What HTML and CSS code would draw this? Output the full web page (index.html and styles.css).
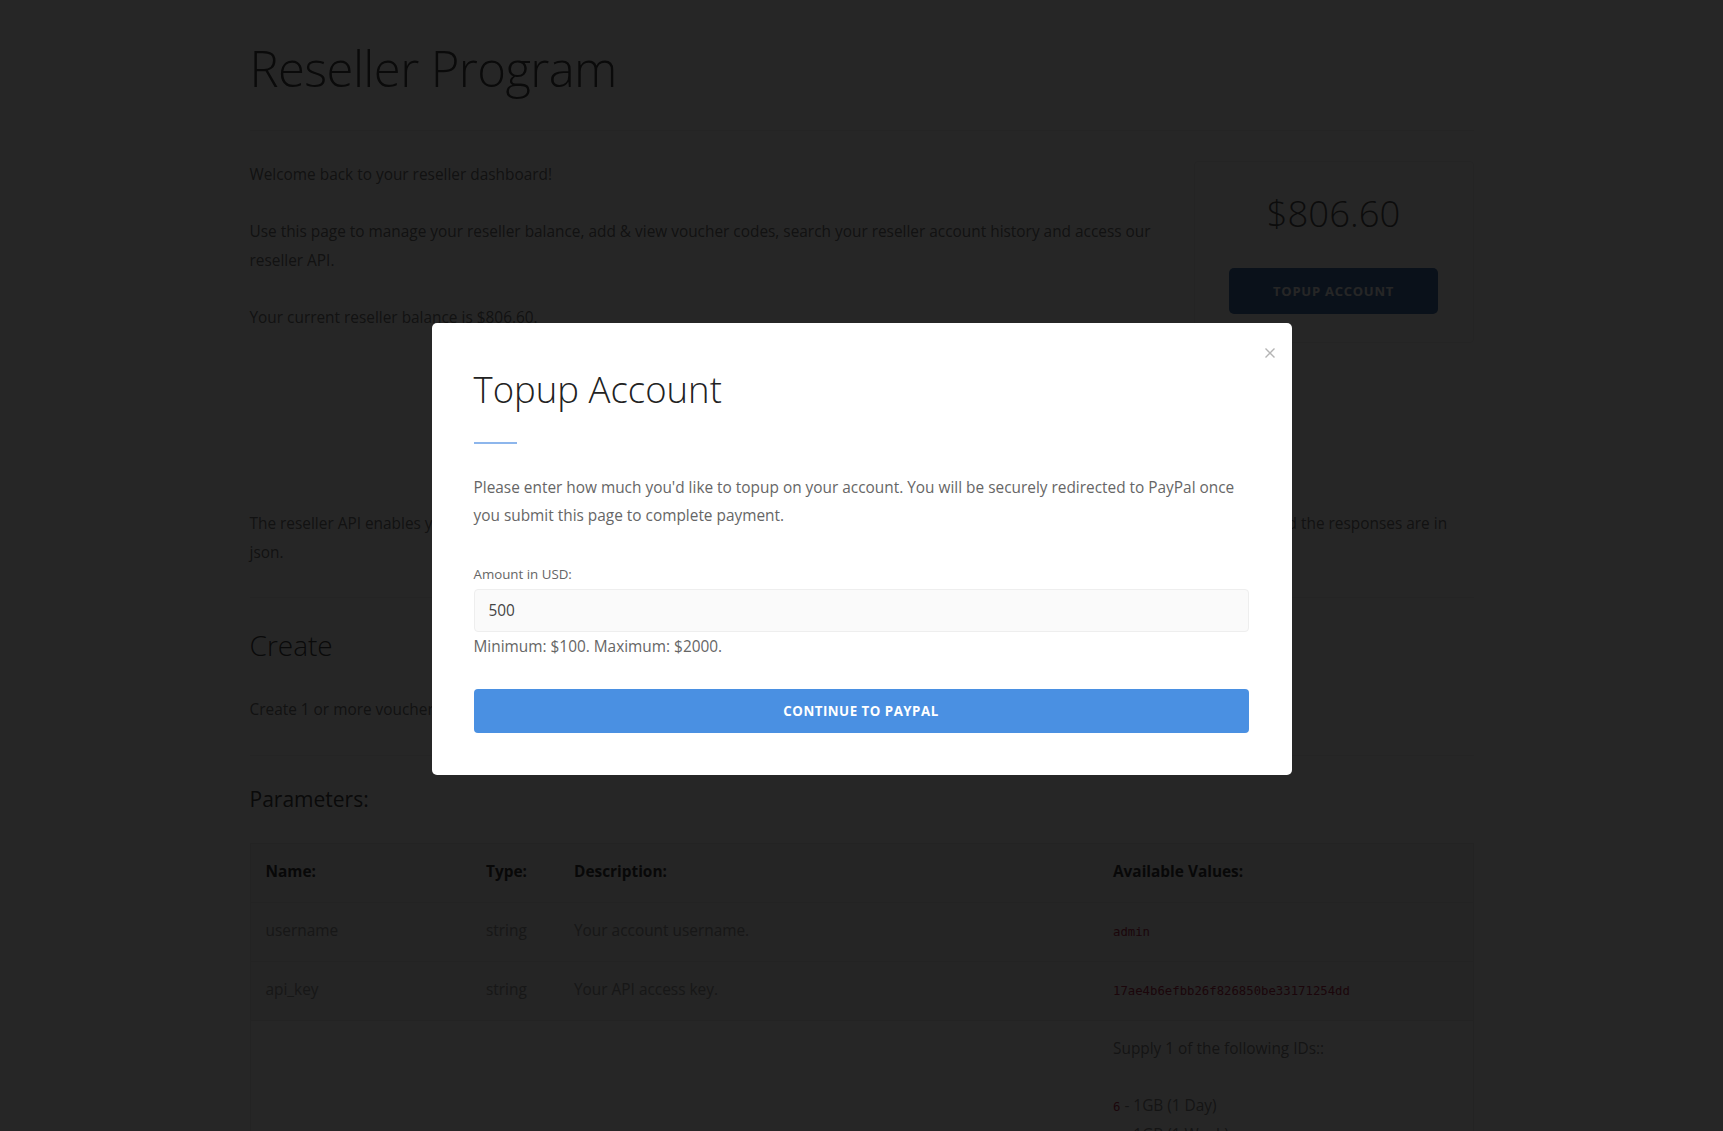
FILE: index.html
```html
<!DOCTYPE html>
<html lang="en">
<head>
<meta charset="utf-8">
<title>Reseller Program</title>
<link rel="stylesheet" href="styles.css">
</head>
<body>
<div class="page">
  <h1 class="page-title">Reseller Program</h1>
  <hr class="rule rule-title">

  <div class="intro">
    <div class="intro-text">
      <p>Welcome back to your reseller dashboard!</p>
      <p>Use this page to manage your reseller balance, add &amp; view voucher codes, search your reseller account history and access our reseller API.</p>
      <p class="last">Your current reseller balance is $806.60.</p>
    </div>
    <aside class="balance-card">
      <div class="balance">$806.60</div>
      <button class="btn-topup" type="button">Topup Account</button>
    </aside>
  </div>

  <p class="api-intro">The reseller API enables you to create voucher codes from your own website or application. All requests are sent as simple HTTP GET requests and the responses are in json.</p>
  <hr class="rule rule-api">

  <h2 class="section-title">Create</h2>
  <p class="section-text">Create 1 or more voucher codes for one of your plans.</p>
  <hr class="rule rule-create">

  <h3 class="params-title">Parameters:</h3>
  <table class="params">
    <colgroup>
      <col class="c-name">
      <col class="c-type">
      <col class="c-desc">
      <col class="c-vals">
    </colgroup>
    <thead>
      <tr>
        <th>Name:</th>
        <th>Type:</th>
        <th>Description:</th>
        <th>Available Values:</th>
      </tr>
    </thead>
    <tbody>
      <tr class="shaded">
        <td>username</td>
        <td>string</td>
        <td>Your account username.</td>
        <td><code>admin</code></td>
      </tr>
      <tr class="shaded">
        <td>api_key</td>
        <td>string</td>
        <td>Your API access key.</td>
        <td><code>17ae4b6efbb26f826850be33171254dd</code></td>
      </tr>
      <tr class="tall">
        <td class="mid">plan_id</td>
        <td class="mid">int</td>
        <td class="mid">The plan the voucher codes are for.</td>
        <td>Supply 1 of the following IDs::<br><br>
          <code>6</code> - 1GB (1 Day)<br>
          <code>7</code> - 1GB (1 Week)<br>
          <code>8</code> - 5GB (1 Month)<br>
          <code>9</code> - 10GB (1 Month)<br>
          <code>10</code> - 25GB (1 Month)<br>
          <code>11</code> - 50GB (1 Month)<br>
          <code>12</code> - 100GB (1 Month)<br>
          <code>13</code> - Unlimited (1 Month)
        </td>
      </tr>
    </tbody>
  </table>
</div>

<div class="backdrop"></div>
<div class="modal-layer">
  <div class="modal" role="dialog" aria-labelledby="topup-title">
    <button class="modal-close" type="button" aria-label="Close">
      <svg width="10" height="10" viewBox="0 0 10 10"><path d="M0.5 0.5 L9.5 9.5 M9.5 0.5 L0.5 9.5" stroke="#b4b4b4" stroke-width="1.4" fill="none"/></svg>
    </button>
    <h2 class="modal-title" id="topup-title">Topup Account</h2>
    <div class="title-bar"></div>
    <p class="modal-text">Please enter how much you'd like to topup on your account. You will be securely redirected to PayPal once you submit this page to complete payment.</p>
    <label class="field-label" for="amount">Amount in USD:</label>
    <input class="field-input" id="amount" type="text" value="500">
    <div class="field-hint">Minimum: $100. Maximum: $2000.</div>
    <button class="btn-paypal" type="button">Continue to PayPal</button>
  </div>
</div>
</body>
</html>
```
FILE: styles.css
```css
* { box-sizing: border-box; }

html, body {
  margin: 0;
  height: 100%;
}

body {
  background: #ffffff;
  font-family: "Open Sans", Roboto, sans-serif;
  font-size: 15.4px;
  line-height: 28.5px;
  color: #777777;
  overflow: hidden;
}

.page {
  width: 1224px;
  margin: 0 auto;
  padding-top: 41px;
}

.page-title {
  margin: 0;
  font-size: 49px;
  font-weight: 300;
  line-height: 55px;
  letter-spacing: -0.6px;
  color: #444444;
}

.rule {
  height: 0;
  margin: 0;
  border: 0;
  border-top: 1px solid #eeeeee;
}

.rule-title { margin-top: 34px; }

.intro {
  display: grid;
  grid-template-columns: 1fr 280px;
  column-gap: 33px;
  align-items: start;
  margin-top: 30px;
}

.intro-text p { margin: 0 0 28.5px; }
.intro-text p.last { margin: 0; }

.balance-card {
  height: 182px;
  margin-top: 0;
  padding-top: 32px;
  border: 1px solid #eeeeee;
  border-radius: 4px;
  text-align: center;
}

.balance {
  font-size: 36.5px;
  font-weight: 300;
  line-height: 39.6px;
  color: #555555;
}

.btn-topup {
  width: 209px;
  height: 46px;
  margin-top: 34px;
  border: 0;
  border-radius: 5px;
  background: #4472ad;
  color: #ffffff;
  font-family: "Open Sans", sans-serif;
  font-size: 13px;
  font-weight: 700;
  letter-spacing: 0.75px;
  text-transform: uppercase;
}

.api-intro { margin: 167px 0 0; }

.rule-api { margin-top: 30px; }

.section-title {
  margin: 32px 0 0;
  font-size: 28px;
  font-weight: 300;
  line-height: 30.8px;
  color: #444444;
}

.section-text { margin: 35.4px 0 0; }

.rule-create { margin-top: 30.5px; }

.params-title {
  margin: 30.4px 0 0;
  font-size: 21px;
  font-weight: 400;
  line-height: 24.2px;
  color: #444444;
}

.params {
  width: 100%;
  margin-top: 32px;
  border-collapse: collapse;
  table-layout: fixed;
  border: 1px solid #e6e6e6;
}

.c-name { width: 221px; }
.c-type { width: 88px; }
.c-desc { width: 539px; }

.params th,
.params td {
  padding: 14px 15px 15.6px;
  text-align: left;
  vertical-align: top;
  font-size: 15.4px;
  line-height: 28.5px;
}

.params th {
  font-weight: 700;
  color: #3a3a3a;
}

.params td {
  color: #9a9a9a;
  border-top: 1px solid #ececec;
}

.params thead tr,
.params tr.shaded { background: #f4f4f4; }

.params tr.tall td:last-child { color: #888888; }

.params td.mid { vertical-align: middle; }

.params code {
  font-family: "DejaVu Sans Mono", "Liberation Mono", monospace;
  font-size: 12.3px;
  line-height: 1;
  color: #b52a4c;
}

/* modal */
.backdrop {
  position: fixed;
  inset: 0;
  background: rgba(0, 0, 0, 0.85);
}

.modal-layer {
  position: fixed;
  inset: 0;
  display: flex;
  justify-content: center;
  align-items: flex-start;
  padding-top: 323px;
}

.modal {
  position: relative;
  width: 860px;
  padding: 46px 43px 42px 42px;
  background: #ffffff;
  border-radius: 5px;
}

.modal-close {
  position: absolute;
  top: 25px;
  right: 17px;
  width: 10px;
  height: 10px;
  padding: 0;
  border: 0;
  background: none;
  line-height: 0;
}

.modal-title {
  margin: 0;
  font-size: 36.5px;
  font-weight: 300;
  line-height: 40px;
  color: #222222;
}

.title-bar {
  width: 43px;
  height: 2px;
  margin-top: 32.5px;
  background: #8db6ec;
}

.modal-text {
  margin: 30px 0 0;
  color: #666666;
}

.field-label {
  display: block;
  margin-top: 33px;
  font-size: 13.3px;
  line-height: 20px;
  color: #666666;
}

.field-input {
  display: block;
  width: 100%;
  height: 43px;
  margin-top: 5px;
  padding: 0 14px;
  border: 1px solid #eeeeee;
  border-radius: 4px;
  background: #fafafa;
  font-family: "Open Sans", sans-serif;
  font-size: 15.4px;
  color: #444444;
}

.field-hint {
  margin-top: 1.5px;
  color: #666666;
}

.btn-paypal {
  display: block;
  width: 100%;
  height: 44px;
  margin-top: 27px;
  border: 0;
  border-radius: 4px;
  background: #4a90e2;
  color: #ffffff;
  font-family: "Open Sans", sans-serif;
  font-size: 13.3px;
  font-weight: 700;
  letter-spacing: 0.5px;
  text-transform: uppercase;
}
```
